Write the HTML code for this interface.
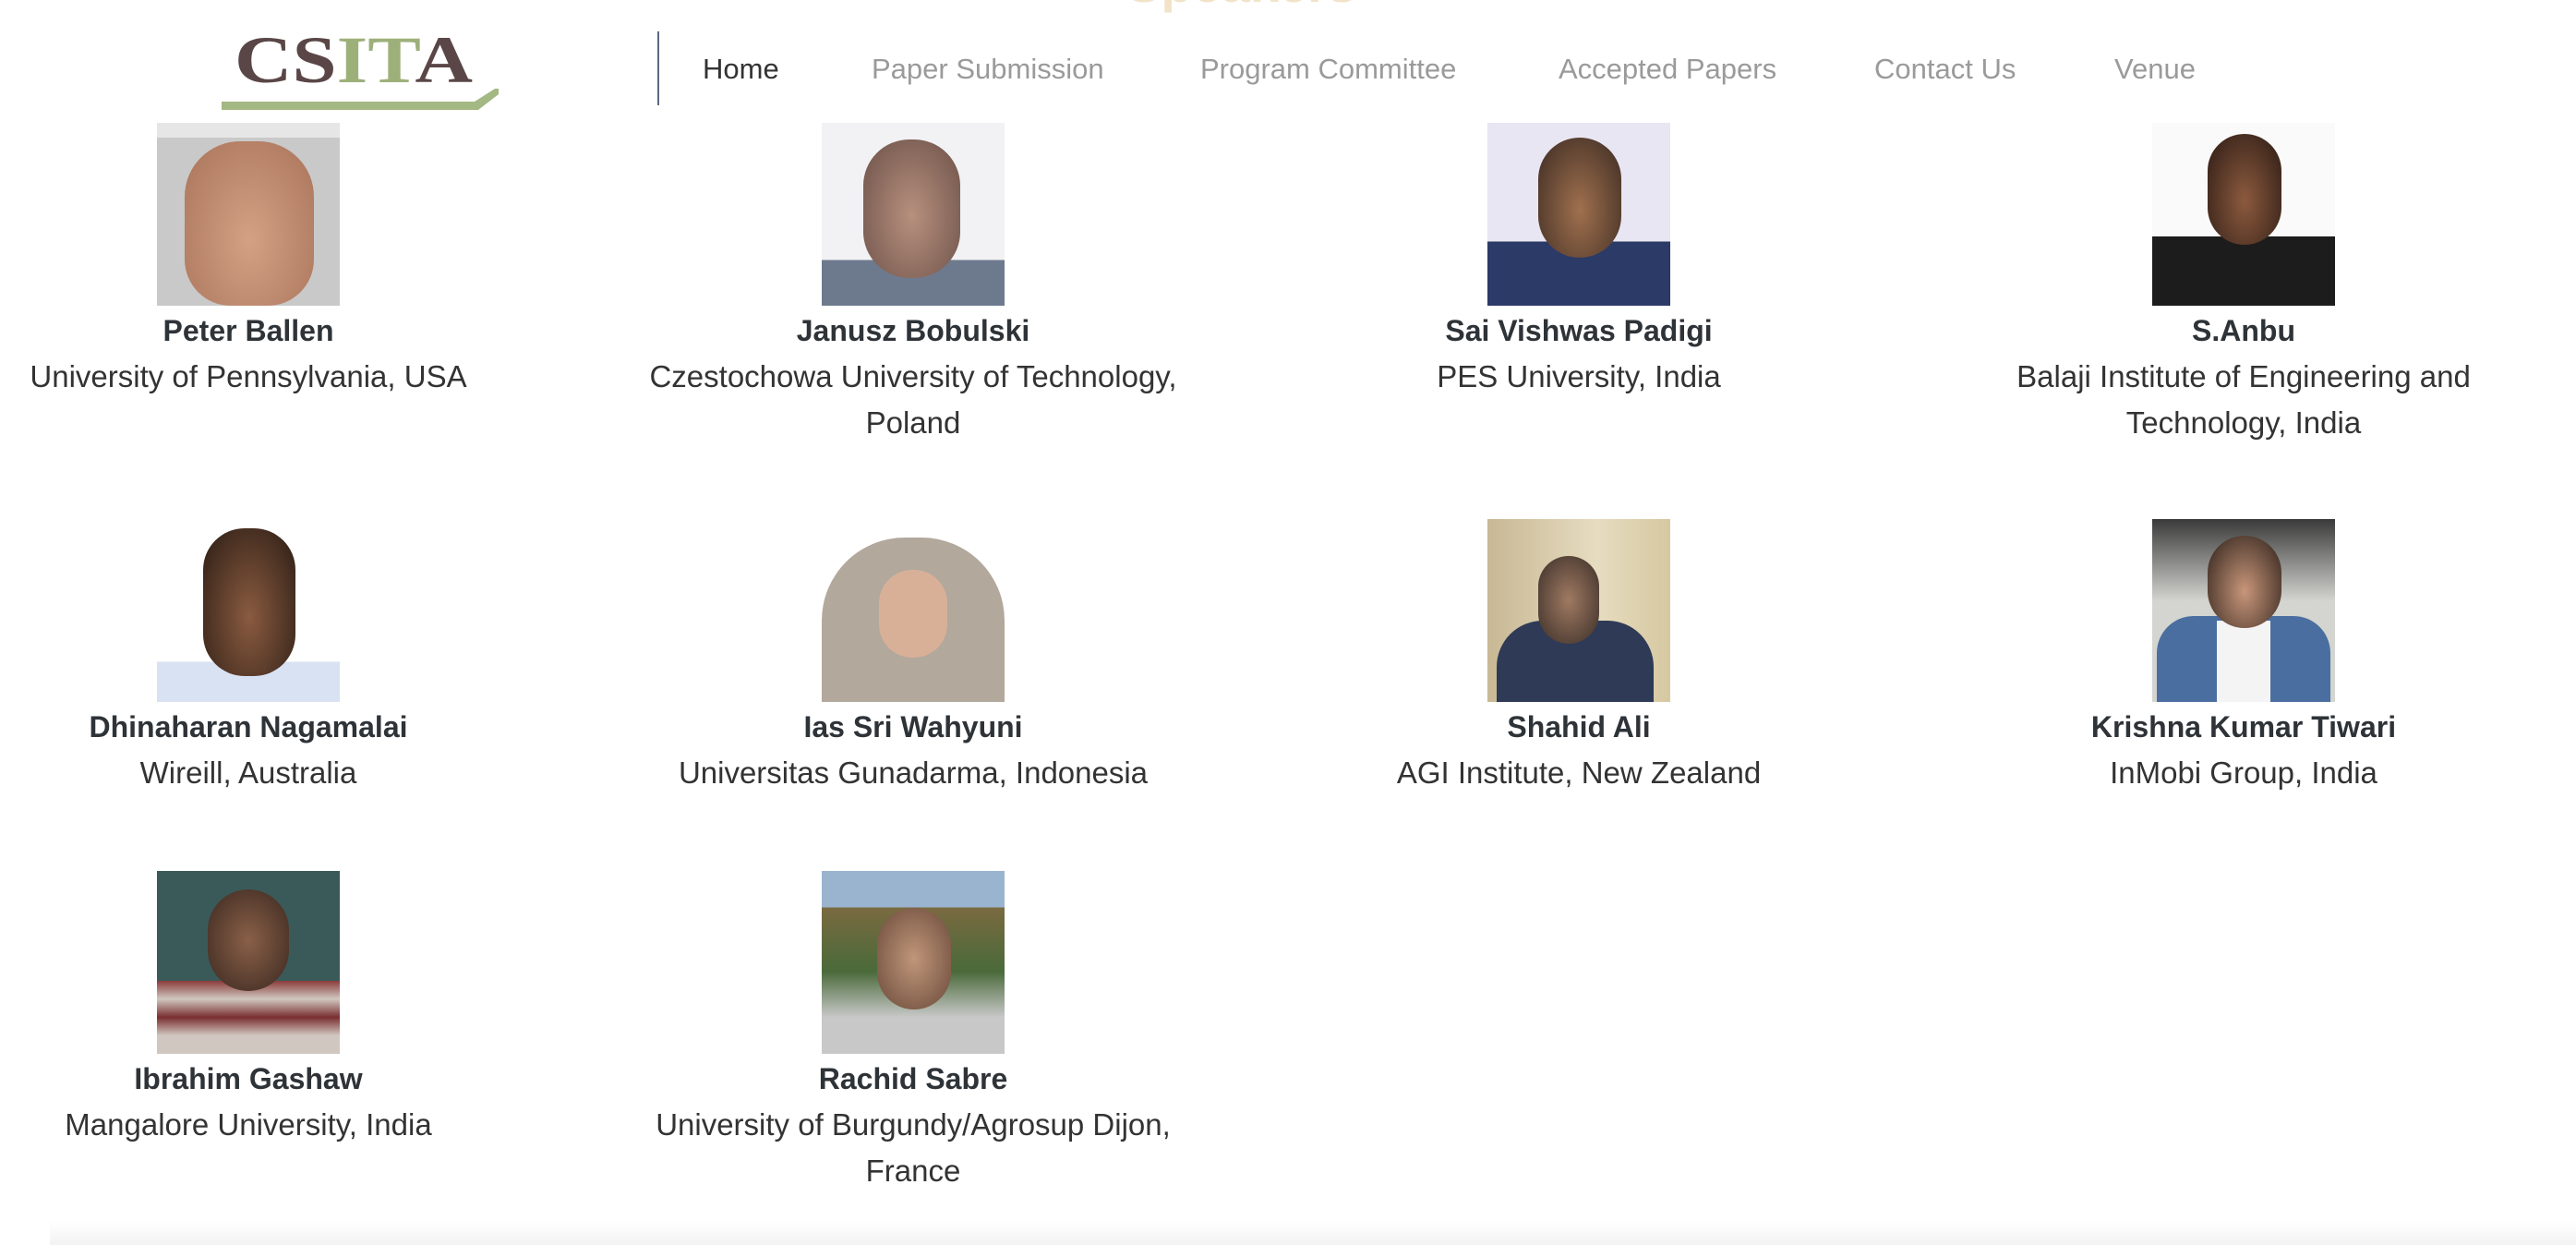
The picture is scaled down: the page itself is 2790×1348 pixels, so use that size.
<!DOCTYPE html>
<html><head><meta charset="utf-8"><style>
body{margin:0;width:2790px;height:1348px;background:#fff;overflow:hidden;position:relative;font-family:"Liberation Sans",sans-serif;color:#333}
.sp{position:absolute;left:1220px;top:-50px;font-size:56px;font-weight:bold;color:#f2e3c8}
.logo{position:absolute;left:240px;top:30px;width:300px;height:92px}
.div{position:absolute;left:712px;top:34px;width:2px;height:80px;background:#5a6a7e}
.nav{position:absolute;top:57px;font-size:31px;color:#9a9a9a;white-space:nowrap}
.card{position:absolute;width:614px;text-align:center}
.ph{width:198px;height:198px;margin:0 auto}
.n{font-weight:bold;font-size:32px;margin-top:6px;line-height:42px;color:#2e3338}
.a{font-size:33px;line-height:50px;margin-top:4px}
.shadow{position:absolute;left:54px;right:0;top:1322px;height:26px;background:linear-gradient(#fff,#f3f3f3)}
</style></head><body>
<div class="sp">Speakers</div>
<svg class="logo" viewBox="0 0 300 92">
<text x="14" y="59" font-family="Liberation Serif" font-weight="bold" font-size="72" fill="#5a4646" textLength="258" lengthAdjust="spacingAndGlyphs">CS<tspan fill="#9db07a">IT</tspan>A</text>
<polygon points="0,80 274,80 296,66 300,66 300,72 278,89 0,89" fill="#a3b883"/>
</svg>
<div class="div"></div>
<div class="nav" style="left:761px;color:#333">Home</div>
<div class="nav" style="left:944px">Paper Submission</div>
<div class="nav" style="left:1300px">Program Committee</div>
<div class="nav" style="left:1688px">Accepted Papers</div>
<div class="nav" style="left:2030px">Contact Us</div>
<div class="nav" style="left:2290px">Venue</div>

<div class="card" style="left:-38px;top:133px"><div class="ph" style="background:linear-gradient(#e6e6e6 0 16px,#c9c9c9 16px);position:relative"><div style="position:absolute;left:30px;top:20px;width:140px;height:178px;border-radius:60px 60px 50px 50px;background:radial-gradient(ellipse at 50% 60%,#d4a184,#a8735a)"></div></div><div class="n">Peter Ballen</div><div class="a">University of Pennsylvania, USA</div></div>
<div class="card" style="left:682px;top:133px"><div class="ph" style="background:linear-gradient(#f2f2f4 0 75%,#6d7a8e 75%);position:relative"><div style="position:absolute;left:45px;top:18px;width:105px;height:150px;border-radius:50px;background:radial-gradient(ellipse at 50% 55%,#b7907e,#6b5048)"></div></div><div class="n">Janusz Bobulski</div><div class="a">Czestochowa University of Technology, Poland</div></div>
<div class="card" style="left:1403px;top:133px"><div class="ph" style="background:linear-gradient(#e8e6f2 0 65%,#2b3a66 65%);position:relative"><div style="position:absolute;left:55px;top:16px;width:90px;height:130px;border-radius:45px;background:radial-gradient(ellipse at 50% 60%,#a0704e,#3a2a22)"></div></div><div class="n">Sai Vishwas Padigi</div><div class="a">PES University, India</div></div>
<div class="card" style="left:2123px;top:133px"><div class="ph" style="background:linear-gradient(#fafafa 0 62%,#1c1c1c 62%);position:relative"><div style="position:absolute;left:60px;top:12px;width:80px;height:120px;border-radius:40px;background:radial-gradient(ellipse at 50% 60%,#8c5a3e,#2a1a14)"></div></div><div class="n">S.Anbu</div><div class="a">Balaji Institute of Engineering and Technology, India</div></div>

<div class="card" style="left:-38px;top:562px"><div class="ph" style="background:linear-gradient(#fff 0 78%,#d8e2f2 78%);position:relative"><div style="position:absolute;left:50px;top:10px;width:100px;height:160px;border-radius:45px;background:radial-gradient(ellipse at 50% 60%,#8a5b40,#2a1c14)"></div></div><div class="n">Dhinaharan Nagamalai</div><div class="a">Wireill, Australia</div></div>
<div class="card" style="left:682px;top:562px"><div class="ph" style="background:#fff;position:relative"><div style="position:absolute;left:0;top:20px;width:198px;height:178px;border-radius:90px 90px 0 0;background:#b2a89c"></div><div style="position:absolute;left:62px;top:55px;width:74px;height:95px;border-radius:36px;background:#d8b098"></div></div><div class="n">Ias Sri Wahyuni</div><div class="a">Universitas Gunadarma, Indonesia</div></div>
<div class="card" style="left:1403px;top:562px"><div class="ph" style="background:linear-gradient(90deg,#c8b894,#e6dcc0 60%,#d6c8a0);position:relative"><div style="position:absolute;left:10px;top:110px;width:170px;height:88px;border-radius:50px 50px 0 0;background:#2e3a56"></div><div style="position:absolute;left:55px;top:40px;width:66px;height:95px;border-radius:33px;background:radial-gradient(ellipse,#a07a62,#3a2e28)"></div></div><div class="n">Shahid Ali</div><div class="a">AGI Institute, New Zealand</div></div>
<div class="card" style="left:2123px;top:562px"><div class="ph" style="background:linear-gradient(#3a3a3a,#d4d4d0 45%);position:relative"><div style="position:absolute;left:5px;top:105px;width:188px;height:93px;border-radius:40px 40px 0 0;background:#4a6ea0"></div><div style="position:absolute;left:70px;top:110px;width:58px;height:88px;background:#f4f4f4"></div><div style="position:absolute;left:60px;top:18px;width:80px;height:100px;border-radius:40px;background:radial-gradient(ellipse at 50% 60%,#c8967a,#2a1e18)"></div></div><div class="n">Krishna Kumar Tiwari</div><div class="a">InMobi Group, India</div></div>

<div class="card" style="left:-38px;top:943px"><div class="ph" style="background:linear-gradient(#3a5a5a 0 60%,#8a3a3a 60%,#d0c8c0 70%,#7a2e30 80%,#d0c8c0 90%);position:relative"><div style="position:absolute;left:55px;top:20px;width:88px;height:110px;border-radius:44px;background:radial-gradient(ellipse,#8a6048,#3a2820)"></div></div><div class="n">Ibrahim Gashaw</div><div class="a">Mangalore University, India</div></div>
<div class="card" style="left:682px;top:943px"><div class="ph" style="background:linear-gradient(#9ab4d0 0 20%,#7a6a40 20%,#4a6a3a 55%,#c8c8c8 80%);position:relative"><div style="position:absolute;left:60px;top:40px;width:80px;height:110px;border-radius:40px;background:radial-gradient(ellipse,#c0967a,#6a4a3a)"></div></div><div class="n">Rachid Sabre</div><div class="a">University of Burgundy/Agrosup Dijon, France</div></div>
<div class="shadow"></div>
</body></html>
